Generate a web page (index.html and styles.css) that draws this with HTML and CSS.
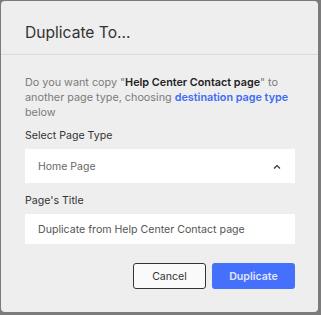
FILE: index.html
```html
<!DOCTYPE html>
<html>
<head>
<meta charset="utf-8">
<link rel="stylesheet" href="styles.css">
</head>
<body>
<div class="modal">
  <div class="modal-header">
    <h2 class="modal-title">Duplicate To...</h2>
  </div>
  <div class="modal-body">
    <p class="intro">Do you want copy "<b>Help Center Contact page</b>" to another page type, choosing <span class="link">destination page type</span> below</p>
    <label class="field-label">Select Page Type</label>
    <div class="select">
      <span>Home Page</span>
      <svg class="chev" width="8" height="5" viewBox="0 0 8 5"><path d="M1 4.5 L4 1.5 L7 4.5" fill="none" stroke="#333" stroke-width="1.2"/></svg>
    </div>
    <label class="field-label second">Page's Title</label>
    <div class="input">Duplicate from Help Center Contact page</div>
    <div class="actions">
      <button class="btn cancel">Cancel</button>
      <button class="btn primary">Duplicate</button>
    </div>
  </div>
</div>
</body>
</html>
```
FILE: styles.css
```css
html, body {
  margin: 0;
  padding: 0;
  background: #7b7b7b;
  width: 321px;
  height: 315px;
  overflow: hidden;
  font-family: Inter, "Noto Sans", sans-serif;
}
body {
  padding: 1px;
  box-sizing: border-box;
}
.modal {
  width: 317px;
  height: 311px;
  background: #eeeeee;
  border-radius: 4px;
  box-sizing: border-box;
}
.modal-header {
  padding: 20px 24px 9px;
  border-bottom: 1px solid #dadada;
}
.modal-title {
  margin: 0;
  font-size: 15.6px;
  line-height: 24px;
  font-weight: 400;
  color: #333;
}
.modal-body {
  padding: 0 22px 0 24px;
  display: flex;
  flex-direction: column;
}
.intro {
  margin: 20px 0 0;
  font-size: 10.8px;
  line-height: 15px;
  color: #7a7a7a;
}
.intro b {
  color: #222;
  font-weight: 600;
}
.link {
  color: #3f6cf5;
  font-weight: 600;
}
.field-label {
  margin-top: 8px;
  font-size: 10.6px;
  line-height: 16px;
  color: #333;
}
.field-label.second {
  margin-top: 10px;
}
.select {
  margin-top: 5px;
  height: 34px;
  margin-right: 1px;
  background: #fff;
  display: flex;
  align-items: center;
  justify-content: space-between;
  padding: 0 13px 0 13px;
  font-size: 10.5px;
  color: #666;
}
.chev {
  margin-right: 1px;
}
.input {
  margin-top: 5px;
  margin-right: 1px;
  height: 30px;
  background: #fff;
  display: flex;
  align-items: center;
  padding: 0 13px;
  font-size: 10.6px;
  color: #555;
}
.actions {
  margin-top: 19px;
  margin-right: 1px;
  display: flex;
  justify-content: flex-end;
  gap: 6px;
}
.btn {
  height: 26px;
  border-radius: 3px;
  font-family: Inter, "Noto Sans", sans-serif;
  font-size: 10.6px;
  padding: 0;
  cursor: pointer;
}
.cancel {
  width: 73px;
  background: #fafafa;
  border: 1px solid #333;
  color: #333;
}
.primary {
  width: 83px;
  background: #4470fc;
  border: none;
  color: #e0e6ff;
  font-weight: 600;
}
```
